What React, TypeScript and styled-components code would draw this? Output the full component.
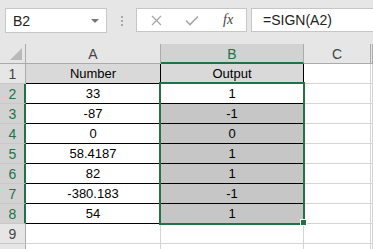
import styled, { createGlobalStyle } from 'styled-components';

const GlobalStyle = createGlobalStyle`
  html, body {
    margin: 0;
    padding: 0;
    background: #ffffff;
    font-family: 'Liberation Sans', Arial, sans-serif;
  }
`;

const Window = styled.div`
  width: 373px;
  height: 249px;
  overflow: hidden;
  background: #ffffff;
`;

const FormulaBar = styled.div`
  height: 44px;
  box-sizing: border-box;
  background: #e6e6e6;
  display: flex;
  align-items: flex-start;
  padding: 8px 0 0 5px;
`;

const NameBox = styled.div`
  width: 102px;
  height: 25px;
  box-sizing: border-box;
  background: #fff;
  border: 1px solid #c6c6c6;
  display: flex;
  align-items: center;
  justify-content: space-between;
  padding: 0 7px 0 7px;
  font-size: 14px;
  color: #222;
`;

const DropArrow = styled.span`
  width: 0;
  height: 0;
  border-left: 4px solid transparent;
  border-right: 4px solid transparent;
  border-top: 4px solid #777;
  margin-top: 1px;
`;

const Grip = styled.div`
  width: 29px;
  height: 25px;
  display: flex;
  flex-direction: column;
  align-items: center;
  justify-content: center;
  gap: 2px;

  span {
    width: 2px;
    height: 2px;
    background: #a8a8a8;
  }
`;

const IconBox = styled.div`
  width: 111px;
  height: 24px;
  box-sizing: border-box;
  background: #fff;
  border: 1px solid #c6c6c6;
  display: flex;
  align-items: center;
  padding-left: 14px;
  gap: 23px;
`;

const Fx = styled.span`
  font-family: 'Liberation Serif', 'Times New Roman', serif;
  font-style: italic;
  font-size: 14px;
  color: #444;
  margin-left: 1px;
`;

const FormulaInput = styled.div`
  flex: 1;
  height: 24px;
  box-sizing: border-box;
  margin-left: 4px;
  background: #fff;
  border: 1px solid #c6c6c6;
  border-right: none;
  display: flex;
  align-items: center;
  padding-left: 11px;
  font-size: 14px;
  color: #222;
`;

const Sheet = styled.div`
  position: relative;
  display: grid;
  grid-template-columns: 26px 135px 143px 67px 1fr;
  grid-auto-rows: 20px;
  font-size: 13px;
`;

const Corner = styled.div`
  position: relative;
  box-sizing: border-box;
  background: #e6e6e6;
  border-right: 1px solid #ababab;
  border-bottom: 1px solid #ababab;

  &::after {
    content: '';
    position: absolute;
    right: 3px;
    bottom: 3px;
    width: 0;
    height: 0;
    border-left: 12px solid transparent;
    border-bottom: 12px solid #b9b9b9;
  }
`;

const ColHead = styled.div<{ $sel?: boolean }>`
  box-sizing: border-box;
  background: ${p => (p.$sel ? '#d2d2d2' : '#e6e6e6')};
  border-right: 1px solid #ababab;
  border-bottom: ${p => (p.$sel ? '2px solid #217346' : '1px solid #ababab')};
  color: ${p => (p.$sel ? '#217346' : '#444')};
  display: flex;
  align-items: center;
  justify-content: center;
  font-size: 14px;
  padding-top: ${p => (p.$sel ? '1px' : '0')};
`;

const RowHead = styled.div<{ $sel?: boolean }>`
  box-sizing: border-box;
  background: ${p => (p.$sel ? '#d2d2d2' : '#e6e6e6')};
  border-right: ${p => (p.$sel ? '2px solid #217346' : '1px solid #ababab')};
  border-bottom: 1px solid #c8c8c8;
  color: ${p => (p.$sel ? '#217346' : '#444')};
  display: flex;
  align-items: center;
  justify-content: center;
  font-size: 14px;
  padding-left: ${p => (p.$sel ? '1px' : '0')};
`;

const Cell = styled.div<{ $fill?: string; $data?: boolean }>`
  box-sizing: border-box;
  background: ${p => p.$fill || '#fff'};
  border-right: 1px solid ${p => (p.$data ? '#000' : '#d4d4d4')};
  border-bottom: 1px solid ${p => (p.$data ? '#000' : '#d4d4d4')};
  display: flex;
  align-items: center;
  justify-content: center;
  color: #000;
  white-space: nowrap;
`;

const Selection = styled.div`
  position: absolute;
  left: 159px;
  top: 38px;
  width: 146px;
  height: 143px;
  box-sizing: border-box;
  border: 2px solid #217346;
  pointer-events: none;
`;

const FillHandle = styled.div`
  position: absolute;
  left: 300px;
  top: 175px;
  width: 7px;
  height: 7px;
  box-sizing: border-box;
  background: #217346;
  border: 1px solid #fff;
`;

const numbers = ['33', '-87', '0', '58.4187', '82', '-380.183', '54'];
const outputs = ['1', '-1', '0', '1', '1', '-1', '1'];

export default function App() {
  const rows = [];
  for (let r = 1; r <= 10; r++) {
    const sel = r >= 2 && r <= 8;
    let a = '';
    let b = '';
    let fillA: string | undefined;
    let fillB: string | undefined;
    const data = r <= 8;
    if (r === 1) {
      a = 'Number';
      b = 'Output';
      fillA = '#d9d9d9';
      fillB = '#d9d9d9';
    } else if (sel) {
      a = numbers[r - 2];
      b = outputs[r - 2];
      fillB = r === 2 ? '#fff' : '#c6c6c6';
    }
    rows.push(
      <RowHead key={`h${r}`} $sel={sel}>{r < 10 ? r : ''}</RowHead>,
      <Cell key={`a${r}`} $data={data} $fill={fillA}>{a}</Cell>,
      <Cell key={`b${r}`} $data={data} $fill={fillB}>{b}</Cell>,
      <Cell key={`c${r}`} />,
      <Cell key={`d${r}`} />
    );
  }

  return (
    <Window>
      <GlobalStyle />
      <FormulaBar>
        <NameBox>
          B2
          <DropArrow />
        </NameBox>
        <Grip>
          <span />
          <span />
          <span />
        </Grip>
        <IconBox>
          <svg width="11" height="11" viewBox="0 0 11 11">
            <path d="M1 1 L10 10 M10 1 L1 10" stroke="#a6a6a6" strokeWidth="1.3" fill="none" />
          </svg>
          <svg width="14" height="11" viewBox="0 0 14 11">
            <path d="M1 5.5 L5 9.5 L13 1.5" stroke="#a6a6a6" strokeWidth="1.6" fill="none" />
          </svg>
          <Fx>fx</Fx>
        </IconBox>
        <FormulaInput>=SIGN(A2)</FormulaInput>
      </FormulaBar>
      <Sheet>
        <Corner />
        <ColHead>A</ColHead>
        <ColHead $sel>B</ColHead>
        <ColHead>C</ColHead>
        <ColHead />
        {rows}
        <Selection />
        <FillHandle />
      </Sheet>
    </Window>
  );
}
